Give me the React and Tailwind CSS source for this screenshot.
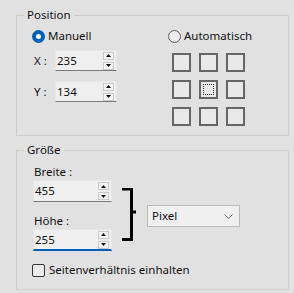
import React from 'react';

// ─── small pieces ─────────────────────────────────────
function Arrow({ down = false }) {
  return (
    <svg width="5" height="3" viewBox="0 0 5 3">
      <path d={down ? 'M0 0 L5 0 L2.5 3 Z' : 'M0 3 L2.5 0 L5 3 Z'} fill="#111" />
    </svg>
  );
}

function Spinner() {
  return (
    <div className="flex flex-col gap-[2px] mr-[2px]">
      <div className="flex h-[8px] w-[11px] items-center justify-center border border-[#c9c9c9] bg-[#f5f5f5]">
        <Arrow />
      </div>
      <div className="flex h-[8px] w-[11px] items-center justify-center border border-[#c9c9c9] bg-[#f5f5f5]">
        <Arrow down />
      </div>
    </div>
  );
}

function NumberField({ value, className = '', focused = false }) {
  return (
    <div
      className={
        'flex items-center bg-[#efefef] border border-[#e6e6e6] ' +
        (focused ? 'border-b-2 border-b-[#005fb8] ' : 'border-b border-b-[#7a7a7a] ') +
        className
      }
    >
      <span className="flex-1 pl-[1px] leading-none">{value}</span>
      <Spinner />
    </div>
  );
}

function Cell({ active = false }) {
  return (
    <div className="flex h-[19px] w-[19px] items-center justify-center border-2 border-[#666] bg-[#e9e9e9]">
      {active && <div className="h-[11px] w-[11px] border border-dotted border-[#333]" />}
    </div>
  );
}

// ─── dialog ───────────────────────────────────────────
export default function App() {
  return (
    <div
      className="flex h-[293px] w-[294px] flex-col gap-[6px] bg-[#e1e1e1] pt-[7px] pl-[16px] text-[11.5px] text-[#111]"
      style={{ fontFamily: '"Noto Sans", "Liberation Sans", sans-serif' }}
    >
      {/* Position */}
      <fieldset className="w-[273px] border border-[#cdcdcd] pb-[9px]">
        <legend className="ml-[7px] px-[3px] leading-[16px]">Position</legend>
        <div className="flex pt-[5px] pl-[15px]">
          <div className="flex w-[136px] flex-col">
            <label className="flex h-[16px] items-center gap-[3px]">
              <span className="flex h-[13px] w-[13px] items-center justify-center rounded-full bg-[#005fb8]">
                <span className="h-[5px] w-[5px] rounded-full bg-white" />
              </span>
              Manuell
            </label>
            <div className="mt-[6px] flex items-center pl-[2px]">
              <span className="w-[21px]">X :</span>
              <NumberField value="235" className="h-[21px] w-[62px]" />
            </div>
            <div className="mt-[10px] flex items-center pl-[2px]">
              <span className="w-[21px]">Y :</span>
              <NumberField value="134" className="h-[21px] w-[62px]" />
            </div>
          </div>
          <div className="flex flex-col">
            <label className="flex h-[16px] items-center gap-[3px]">
              <span className="h-[13px] w-[13px] rounded-full border border-[#5c5c5c] bg-[#ececec]" />
              Automatisch
            </label>
            <div className="mt-[9px] ml-[4px] grid grid-cols-3 gap-[8px] w-fit">
              <Cell />
              <Cell />
              <Cell />
              <Cell />
              <Cell active />
              <Cell />
              <Cell />
              <Cell />
              <Cell />
            </div>
          </div>
        </div>
      </fieldset>

      {/* Größe */}
      <fieldset className="w-[273px] border border-[#cdcdcd] pb-[11px]">
        <legend className="ml-[7px] px-[3px] leading-[16px]">Größe</legend>
        <div className="flex items-start pt-[6px] pl-[16px]">
          <div className="flex w-[79px] flex-col">
            <span className="h-[16px] pl-[1px] leading-[16px]">Breite :</span>
            <NumberField value="455" className="h-[22px] w-[79px]" />
            <span className="mt-[11px] h-[16px] pl-[1px] leading-[16px]">Höhe :</span>
            <NumberField value="255" focused className="h-[22px] w-[79px]" />
          </div>
          <svg className="mt-[24px] ml-[10px]" width="15" height="53" viewBox="0 0 15 53">
            <path d="M0 1 H9.5 V51.5 H0 M9.5 24 H14" fill="none" stroke="#000" strokeWidth="3" />
          </svg>
          <div className="mt-[41px] ml-[10px] flex h-[22px] w-[93px] items-center justify-between border border-[#b9b9b9] bg-[#efefef] pl-[4px] pr-[6px]">
            <span>Pixel</span>
            <svg width="9" height="5" viewBox="0 0 9 5">
              <path d="M0.5 0.5 L4.5 4.5 L8.5 0.5" fill="none" stroke="#666" strokeWidth="1" />
            </svg>
          </div>
        </div>
        <label className="mt-[11px] flex h-[16px] items-center gap-[4px] pl-[15px]">
          <span className="h-[13px] w-[13px] rounded-[2px] border border-[#333] bg-[#ececec]" />
          Seitenverhältnis einhalten
        </label>
      </fieldset>
    </div>
  );
}
